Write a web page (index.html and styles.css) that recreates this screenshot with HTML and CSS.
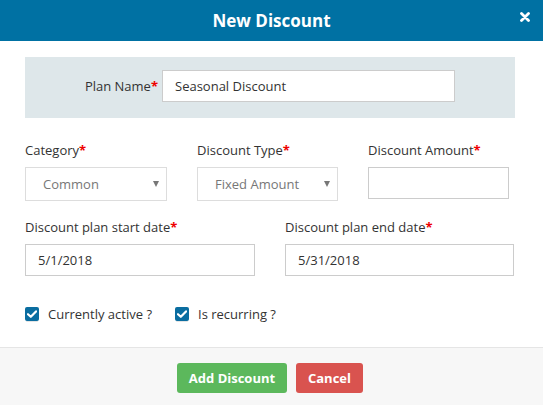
FILE: index.html
```html
<!DOCTYPE html>
<html>
<head>
<meta charset="utf-8">
<link rel="stylesheet" href="styles.css">
</head>
<body>
<div class="modal">
  <div class="header">
    <h1 class="title">New Discount</h1>
    <svg class="close" width="10" height="10" viewBox="0 0 10 10"><path d="M1.5 1.5 L8.5 8.5 M8.5 1.5 L1.5 8.5" stroke="#fff" stroke-width="2.8" stroke-linecap="round"/></svg>
  </div>
  <div class="body">
    <div class="plan">
      <label class="plan-label">Plan Name<span class="req">*</span></label>
      <div class="input plan-input">Seasonal Discount</div>
    </div>
    <div class="row3">
      <div class="field">
        <label class="lbl">Category<span class="req">*</span></label>
        <div class="select"><span>Common</span><span class="arrow"></span></div>
      </div>
      <div class="field">
        <label class="lbl">Discount Type<span class="req">*</span></label>
        <div class="select"><span>Fixed Amount</span><span class="arrow"></span></div>
      </div>
      <div class="field">
        <label class="lbl">Discount Amount<span class="req">*</span></label>
        <div class="input amount"></div>
      </div>
    </div>
    <div class="row2">
      <div class="field">
        <label class="lbl">Discount plan start date<span class="req">*</span></label>
        <div class="input date">5/1/2018</div>
      </div>
      <div class="field">
        <label class="lbl">Discount plan end date<span class="req">*</span></label>
        <div class="input date">5/31/2018</div>
      </div>
    </div>
    <div class="checks">
      <label class="check"><span class="box"><svg width="10" height="8" viewBox="0 0 10 8"><path d="M1 4.2 L3.8 6.8 L9 1.4" fill="none" stroke="#fff" stroke-width="2.2" stroke-linecap="round" stroke-linejoin="round"/></svg></span>Currently active ?</label>
      <label class="check"><span class="box"><svg width="10" height="8" viewBox="0 0 10 8"><path d="M1 4.2 L3.8 6.8 L9 1.4" fill="none" stroke="#fff" stroke-width="2.2" stroke-linecap="round" stroke-linejoin="round"/></svg></span>Is recurring ?</label>
    </div>
  </div>
  <div class="footer">
    <button class="btn btn-add">Add Discount</button>
    <button class="btn btn-cancel">Cancel</button>
  </div>
</div>
</body>
</html>
```
FILE: styles.css
```css
* { box-sizing: border-box; }
html, body { margin: 0; padding: 0; }
body {
  font-family: "Open Sans", "Liberation Sans", sans-serif;
  font-size: 13px;
  color: #333;
  background: #fff;
  width: 543px;
  height: 405px;
  overflow: hidden;
}
.modal { width: 543px; height: 405px; display: flex; flex-direction: column; }
.header {
  height: 41px;
  background: #0071a3;
  display: flex;
  align-items: center;
  justify-content: center;
  position: relative;
}
.title {
  margin: 0;
  color: #fff;
  font-size: 17px;
  font-weight: 700;
  line-height: 1;
}
.close {
  position: absolute;
  right: 13px;
  top: 12px;
}
.body {
  padding: 16px 28px 0 25px;
  flex: 1;
}
.plan {
  background: #dee7ea;
  height: 61px;
  display: flex;
  align-items: flex-start;
  padding-left: 54px;
  padding-top: 13px;
}
.plan-label { width: 83px; text-align: right; line-height: 32px; padding-right: 4px; }
.req { color: #e00; font-weight: 700; }
.input {
  border: 1px solid #ccc;
  background: #fff;
  height: 32px;
  display: flex;
  align-items: center;
  padding-left: 16px;
  font-size: 13px;
  color: #333;
}
.plan-input { width: 293px; padding-left: 12px; }
.row3 {
  display: grid;
  grid-template-columns: 142px 141px 141px;
  column-gap: 30px;
  margin-top: 23px;
}
.lbl { display: block; line-height: 18px; margin-bottom: 8px; }
.select {
  border: 1px solid #ddd;
  height: 34px;
  display: flex;
  align-items: center;
  justify-content: space-between;
  padding: 0 7px 0 17px;
  color: #777;
  font-size: 13px;
}
.arrow {
  width: 0; height: 0;
  border-left: 3.5px solid transparent;
  border-right: 3.5px solid transparent;
  border-top: 6px solid #777;
}
.amount { width: 141px; height: 32px; }
.row2 {
  display: grid;
  grid-template-columns: 230px 229px;
  column-gap: 30px;
  margin-top: 17px;
}
.date { height: 32px; padding-left: 12px; }
.checks {
  display: flex;
  gap: 23px;
  margin-top: 29px;
}
.check { display: flex; align-items: center; gap: 9px; line-height: 18px; }
.box {
  width: 14px; height: 14px;
  background: #0a6da0;
  border-radius: 2px;
  display: flex;
  align-items: center;
  justify-content: center;
  box-shadow: 0 2px 0 -1px #e4e4e4;
}
.footer {
  border-top: 1px solid #e5e5e5;
  background: #f7f7f7;
  height: 58px;
  display: flex;
  justify-content: center;
  gap: 9px;
  padding-top: 15px;
  padding-right: 3px;
}
.btn {
  font-family: "Open Sans", "Liberation Sans", sans-serif;
  font-size: 13px;
  font-weight: 700;
  color: #fff;
  border: none;
  border-radius: 3px;
  height: 30px;
  padding: 0 11px;
}
.btn-add { background: #5cb85c; width: 110px; }
.btn-cancel { background: #d9534f; width: 67px; }
```
